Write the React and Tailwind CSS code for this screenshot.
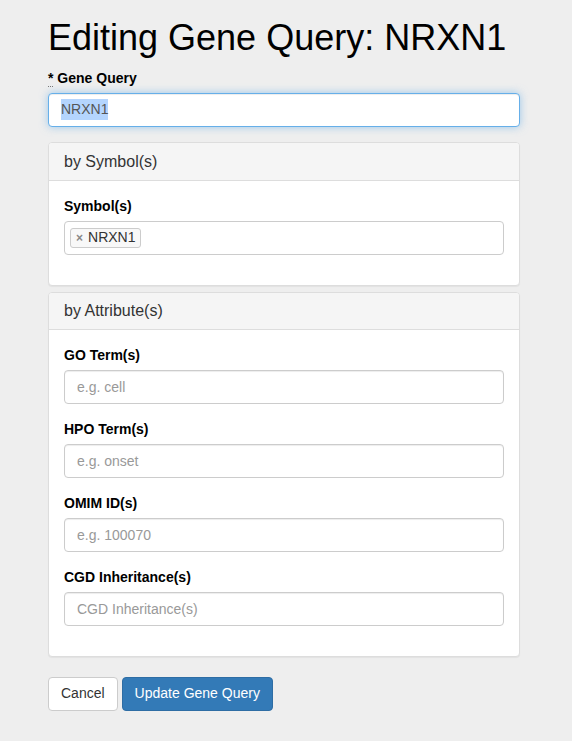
import React from "react";

const font = { fontFamily: '"Liberation Sans", Arial, Helvetica, sans-serif' };

function Field({ label, placeholder }) {
  return (
    <div className="mb-[15px]">
      <label className="block font-bold text-[14px] leading-[20px] mb-[5px] text-black">{label}</label>
      <input
        placeholder={placeholder}
        className="block w-full h-[34px] px-[12px] py-[6px] text-[14px] text-[#555] bg-white border border-[#ccc] rounded-[4px] shadow-[inset_0_1px_1px_rgba(0,0,0,0.075)] placeholder:text-[#999] outline-none"
      />
    </div>
  );
}

function Panel({ title, children, tall }) {
  return (
    <div className="bg-white border border-[#ddd] rounded-[4px] shadow-[0_1px_1px_rgba(0,0,0,0.05)]">
      <div
        className={
          tall
            ? "bg-[#f5f5f5] border-b border-[#ddd] rounded-t-[3px] px-[15px] py-[10px] text-[16px] leading-[17px] text-[#333]"
            : "bg-[#f5f5f5] border-b border-[#ddd] rounded-t-[3px] px-[15px] py-[10px] text-[16px] leading-[16px] text-[#333]"
        }
      >
        {title}
      </div>
      <div className="p-[15px]">{children}</div>
    </div>
  );
}

export default function App() {
  return (
    <div className="min-h-[741px] bg-[#eeeeee] text-[#333] text-[14px]" style={font}>
      <div className="ml-[48px] w-[472px] pt-[18px]">
        <h1 className="text-[36px] leading-[39.6px] font-normal text-black mb-[10px]">
          Editing Gene Query: NRXN1
        </h1>
        <div>
          <label className="block font-bold text-[14px] leading-[20px] mb-[5px] text-black">
            <span className="border-b border-dotted border-[#777]">*</span> Gene Query
          </label>
          <div className="h-[34px] px-[12px] flex items-center text-[14px] text-[#555] bg-white border border-[#66afe9] rounded-[4px] shadow-[inset_0_1px_1px_rgba(0,0,0,0.075),0_0_8px_rgba(102,175,233,0.6)]">
            <span className="bg-[#b4d5fe]">NRXN1</span>
          </div>
        </div>
        <div className="mt-[15px]">
          <Panel title="by Symbol(s)" tall>
            <div className="mb-[15px]">
              <label className="block font-bold text-[14px] leading-[20px] mb-[5px] text-black">Symbol(s)</label>
              <div className="h-[34px] px-[5px] flex items-center bg-white border border-[#ccc] rounded-[4px]">
                <span className="flex items-center h-[20px] px-[5px] border border-[#ccc] rounded-[3px] bg-[#f8f8f8] text-[14px] text-[#333]">
                  <span className="text-[#888] font-bold text-[12px] mr-[5px]">×</span>NRXN1
                </span>
              </div>
            </div>
          </Panel>
        </div>
        <div className="mt-[6px]">
          <Panel title="by Attribute(s)">
            <Field label="GO Term(s)" placeholder="e.g. cell" />
            <Field label="HPO Term(s)" placeholder="e.g. onset" />
            <Field label="OMIM ID(s)" placeholder="e.g. 100070" />
            <Field label="CGD Inheritance(s)" placeholder="CGD Inheritance(s)" />
          </Panel>
        </div>
        <div className="mt-[20px] flex gap-[4px]">
          <button className="h-[34px] px-[12px] text-[14px] text-[#333] bg-white border border-[#ccc] rounded-[4px]">
            Cancel
          </button>
          <button className="h-[34px] px-[12px] text-[14px] text-white bg-[#337ab7] border border-[#2e6da4] rounded-[4px]">
            Update Gene Query
          </button>
        </div>
      </div>
    </div>
  );
}
